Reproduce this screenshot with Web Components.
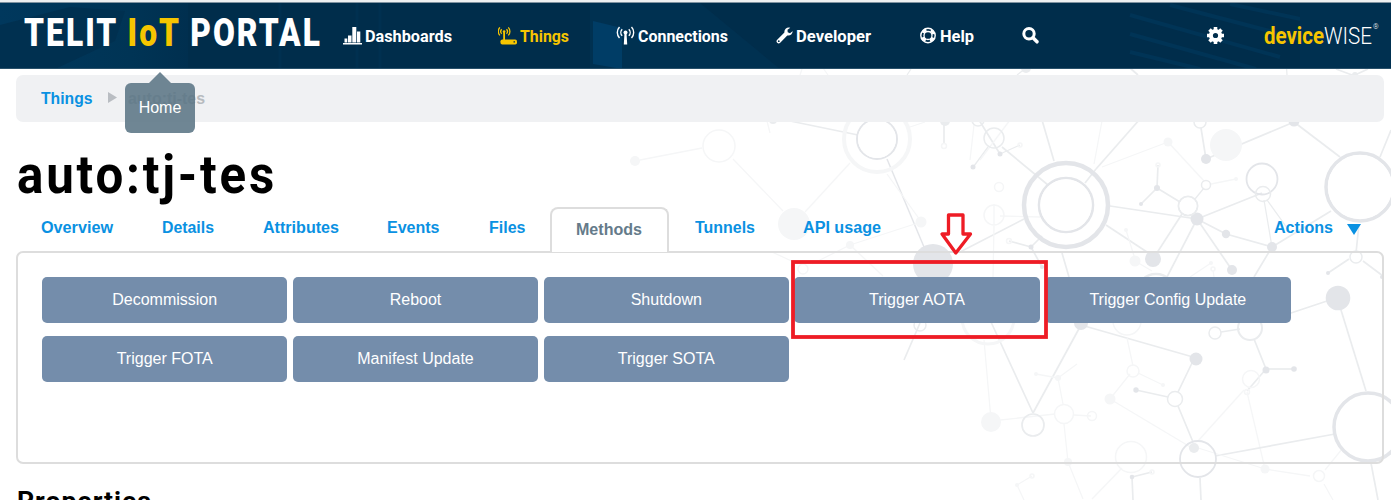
<!DOCTYPE html>
<html lang="en">
<head>
<meta charset="utf-8">
<title>auto:tj-tes</title>
<style>
html,body{margin:0;height:500px;overflow:hidden;background:#fff}
body{font:16px "Liberation Sans",Arial,sans-serif}
</style>
</head>
<body>
<portal-page></portal-page>
<script>
function define(name, html, after) {
  const t = document.createElement('template');
  t.innerHTML = html;
  customElements.define(name, class extends HTMLElement {
    connectedCallback() {
      if (this.shadowRoot) return;
      this.attachShadow({mode: 'open'}).appendChild(t.content.cloneNode(true));
      if (after) after.call(this, this.shadowRoot);
    }
  });
}

/* Text condensed or widened horizontally to a given width */
define('fit-text', `<style>:host{display:inline-block;white-space:nowrap}span{display:inline-block;transform-origin:0 50%}</style><span><slot></slot></span>`,
function (root) {
  const s = root.querySelector('span'), w = +this.getAttribute('w');
  this.style.width = w + 'px';
  const n = s.offsetWidth ? s.getBoundingClientRect().width : w;
  s.style.transform = 'scaleX(' + (w / n) + ')';
});

/* Decorative network of nodes and links */
define('network-backdrop', `<style>:host{display:block;position:absolute;inset:0;z-index:-1}svg{display:block}</style><svg width="1391" height="500" fill="none"></svg>`,
function (root) {
  const S = '#e3e5e9', M = '#eaecee', L = '#f5f6f7';
  const lines = [
    [L,1.5,640,160,702,148],[L,1.5,733,159,783,211],[L,1.5,805,212,850,163],[M,2,790,121,858,135],[S,1.7,887,159,924,247],[L,1.5,887,174,920,220],[L,1.5,772,252,798,264],[L,1.5,812,264,850,245],[L,1.5,850,245,921,222],[L,1.5,850,245,883,276],
    [M,2,944,124,944,144],[L,1.5,910,127,925,122],[L,1.5,974,125,970,160],[M,1.5,988,147,974,166],[M,2,979,120,1000,154],[M,1.5,1000,154,1020,145],[M,2,1002,147,1048,185],[L,1.5,980,160,1010,120],
    [M,2,960,252,1024,219],[M,2,1042,120,1054,161],[M,2,1096,169,1140,119],[M,2,1096,169,1085,183],[L,1.5,1102,167,1168,142],[L,1.5,1102,121,1094,164],[L,1.5,1168,142,1204,181],[L,1.5,1211,184,1236,179],
    [M,2,1158,165,1157,188],[M,2,1157,188,1141,204],[M,2,1157,188,1180,202],[M,1.5,1195,199,1204,188],[M,2,1110,206,1197,219],[M,2,1106,225,1153,256],[M,2,1182,214,1153,259],[M,2,1197,219,1262,193],[M,2,1197,219,1226,234],[M,2,1197,219,1167,277],[M,2,1197,219,1232,270],[M,2,1226,234,1272,247],[M,1.5,1264,200,1272,247],[M,1.5,1267,200,1290,232],[M,2,1272,247,1331,211],[M,2,1272,247,1254,277],
    [M,2,1201,128,1206,159],[M,2,1206,159,1294,122],[M,2,1294,122,1340,157],[M,2,1380,157,1391,130],[M,2,1359,224,1356,253],[M,2,1349,259,1328,273],[M,2,1363,261,1383,276],
    [L,1.5,994,225,994,204],[L,1.5,1000,216,1040,217],[L,1.5,994,226,993,279],[M,2,1009,241,1031,247],[M,2,1031,247,1042,236],[M,2,1031,247,1042,267],[M,2,1062,253,1069,277],[L,1.5,1126,230,1135,259],[L,1.5,1135,261,1152,271],[L,1.5,1190,277,1211,263],[L,1.5,1213,270,1214,277],
    [M,2,991,322,1033,413],[M,2,1033,413,1081,325],[M,2,1081,325,1193,357],[M,2,1193,361,1178,392],[M,2,1136,390,1168,397],[M,2,1178,406,1193,442],[L,1.5,1110,399,1130,374],[L,1.5,1127,338,1133,366],[L,1.5,1138,373,1163,385],[L,1.5,1110,399,1192,448],[M,2,1221,332,1240,329],[M,2,1254,339,1266,369],[M,2,1266,369,1293,369],[M,2,1266,369,1247,391],[L,1.5,1244,390,1198,441],[L,1.5,1247,392,1265,469],[M,2,1285,315,1330,300],[M,2,1341,310,1366,391],[M,2,1215,456,1335,434],
    [L,1.5,984,340,991,420],[L,1.5,991,421,1055,414],[L,1.5,1036,374,1058,378],[L,1.5,1058,378,1077,364],[L,1.5,1058,378,1063,404],[L,1.5,1074,415,1091,416],[L,1.5,1064,424,1068,462],[L,1.5,1068,462,1083,499],[L,1.5,1092,499,1122,468],[M,2,1132,477,1133,500],[M,2,1132,477,1152,472],[L,1.5,1017,485,1032,476],[L,1.5,1017,485,1024,500],[M,2,1200,478,1201,500],[L,1.5,1195,447,1265,469],[L,1.5,1265,469,1310,476],[L,1.5,1325,470,1342,449],[L,1.5,1324,484,1333,500],[M,2,1371,463,1378,500],[M,2,920,323,904,360],[M,1.5,1238,280,1240,277],[M,1.5,1017,75,1026,68],[M,1.5,911,69,907,75],[L,1.5,800,75,802,69],[L,1.5,828,75,823,68],[M,2,1130,68,1138,75],[M,2,1336,69,1352,75],[M,2,1368,69,1355,75],[M,1.5,1286,60,1287,75],[L,1.5,767,121,770,133]
  ];
  const rings = [
    [L,1.5,719,146,16],[L,4,877,139,33],[S,2,877,139,20],[M,1.5,994,138,10],[L,1.5,944,146,2.5],[M,1.5,978,120,6],[L,1.5,1020,145,2],
    [S,4.5,1066,205,42],[S,2.6,1066,205,27],[L,1.5,994,215,10],[L,1.5,999,187,4.5],[L,1.5,1009,241,2.5],[M,1.5,1200,122,6],[S,1.8,1262,179,15.5],[M,1.5,1263,194,7.5],[M,2,1188,206,9.5],[M,1.5,1206,185,4.5],[L,1.5,1158,165,2],[S,3.5,1360,187,34],[M,1.5,1356,257,6],[M,2.5,1156,293,19],[L,1.5,1213,269,2],
    [L,3,988,318,26],[L,1.5,1127,321,14],[L,1.5,1133,371,6],[M,1.7,1033,425,11],[L,1.5,1064,414,9.5],[L,1.5,1092,416,4.5],[M,1.5,1175,399,7.5],[M,1.5,1215,333,6],[M,2,1250,328,12],[L,1.5,1251,379,8.5],[L,1.5,1247,392,2.5],[L,1.5,1131,457,15.5],[S,1.8,1198,459,18],[S,3.5,1368,427,34],[L,1.5,1319,476,5.5],[L,1.5,1152,472,2],[L,1.5,1032,476,2],[L,1.5,803,269,5],[M,1.5,920,325,6]
  ];
  const dots = [
    [L,635,161,5],[L,794,224,16],[L,921,222,5.5],[L,850,245,4],[S,933,264,20],[M,773,120,4],[M,945,121,5],[S,973,167,2.5],[S,1000,154,2.5],[S,1031,247,2.5],[S,1042,267,2],[L,1168,142,4.5],[L,1226,145,16],[S,1206,159,5],[S,1294,121,5.5],[S,1157,188,3],[S,1141,204,2],[L,1236,179,2],[S,1197,219,6.5],[S,1226,234,4.2],[S,1272,247,5],[S,1153,259,8],[L,1135,261,5.5],[L,1126,230,2],[S,1232,270,5],[L,1211,263,2],[S,1328,273,2],[S,1382,277,2],
    [S,1338,298,12.3],[S,1081,323,7],[S,1196,359,6.5],[S,1136,390,2.7],[L,1110,399,5.5],[L,1163,385,2],[S,1266,370,3.5],[S,1294,369,2.8],[L,991,422,10],[L,1058,378,3],[L,1036,374,2],[L,1068,462,4],[M,1194,448,5],[L,1265,469,4.5],[S,1132,477,2.3],[L,1017,485,2],[M,1026,68,5],[M,1355,75,3]
  ];
  root.querySelector('svg').innerHTML =
    lines.map(([c,w,a,b,x,y]) => `<path stroke="${c}" stroke-width="${w * .85}" d="M${a} ${b}L${x} ${y}"/>`).join('') +
    dots.map(([c,x,y,r]) => `<circle fill="${c}" cx="${x}" cy="${y}" r="${r}"/>`).join('') +
    rings.map(([c,w,x,y,r]) => `<circle stroke="${c}" stroke-width="${w}" cx="${x}" cy="${y}" r="${r}"/>`).join('') +
    `<circle cx="1066" cy="205" r="25.7" fill="#fff"/><circle cx="877" cy="139" r="19" fill="#fff"/><circle cx="1360" cy="187" r="32" fill="#fff"/><circle cx="1188" cy="206" r="8.5" fill="#fff"/>`;
});

const icons = {
  chart: `<path d="M0 17h19v1.5H0zM1.5 12.500H4.300V16.500H1.500zM5 9.500h3.500v7H5zM9.300 1h4v15.500h-4zM14 5.500h3.300v11H14z"/>`,
  router: `<rect x="2.500" y="13.500" width="16.500" height="5" rx="1.800"/><path d="M5.200 6h1.800v8H5.200z"/><circle cx="6.100" cy="5.500" r="1.300"/><g fill="none" stroke="currentColor" stroke-width="1.300"><path d="M3.700 3.200a3.400 3.400 0 0 0 0 4.600M8.500 3.200a3.400 3.400 0 0 1 0 4.600M1.900 1.400a5.800 5.800 0 0 0 0 8M10.300 1.400a5.800 5.800 0 0 1 0 8"/></g><path fill="#002d4b" d="M15.500 15.300h1.500v1.300h-1.500z"/>`,
  signal: `<circle cx="9.500" cy="6.500" r="2"/><path d="M8.500 7h2l.7 11.500H7.800z"/><g fill="none" stroke="currentColor" stroke-width="1.400"><path d="M6.200 3.200a4.700 4.700 0 0 0 0 6.600M12.800 3.200a4.700 4.700 0 0 1 0 6.600M3.500 1a8 8 0 0 0 0 11M15.500 1a8 8 0 0 1 0 11"/></g>`,
  wrench: `<path fill-rule="evenodd" d="M16.700 5.500c-.3 2.700-2.800 4.500-5.400 3.900L4.200 16.700a2.100 2.100 0 0 1-3-3l7.200-7.100C8 3.700 10.300 1.400 13 1.500l1.300.3-2.800 2 .2 2.400 2.300 1 2.500-1.900zM2.800 14.300a.9.900 0 1 0 0 1.800.9.900 0 0 0 0-1.800z"/>`,
  help: `<g fill="none" stroke="currentColor"><circle cx="8" cy="9.500" r="7.200" stroke-width="1.400"/><circle cx="8" cy="9.500" r="4" stroke-width="1.300"/><circle cx="8" cy="9.500" r="5.700" stroke-width="3" stroke-dasharray="4.480 4.480" transform="rotate(22.500 8 9.500)"/></g>`,
  search: `<g fill="none" stroke="currentColor"><circle cx="7" cy="7.700" r="5.200" stroke-width="3"/><path d="M11 11.800l4 4" stroke-width="3.600" stroke-linecap="round"/></g>`,
  cog: `<circle cx="8.500" cy="9.500" r="4.600" fill="none" stroke="currentColor" stroke-width="4"/><g stroke="currentColor" stroke-width="3.600"><path d="M8.500 1v3M8.500 15v3M0 9.500h3M14 9.500h3M2.500 3.500l2 2M12.500 13.500l2 2M2.500 15.500l2-2M12.500 5.500l2-2"/></g>`
};

define('nav-item', `<style>
:host{display:flex;align-items:center;color:#fff;font:bold 17px/20px Roboto,sans-serif}
:host([active]){color:#f6c500}
.icon{flex:none;width:var(--icon,22px)}svg{display:block}
</style><div class="icon"><svg width="20" height="20" fill="currentColor"></svg></div><slot></slot>`,
function (root) { root.querySelector('svg').innerHTML = icons[this.getAttribute('icon')]; });

define('portal-header', `<style>
:host{display:grid;position:relative;box-sizing:border-box;height:69px;padding:3px 0 0 24px;
grid-template-columns:319px 155px 118px 160px 144px 102px 185px 57px 1fr;align-items:center;background:linear-gradient(#eef0f1 2px,#8093a1 2px 3px,#002d4b 3px);color:#fff;font-family:Roboto,sans-serif;z-index:0}
.art{position:absolute;left:0;top:3px;z-index:-1}
.logo{font-size:38.500px;line-height:44px;font-weight:900;letter-spacing:2.500px;margin-top:-6px}
.logo b,.dw b{color:#f6c500}.logo b{font-weight:900}
.dw{display:flex;font-size:23.500px;line-height:28px;font-weight:300}
.dw b{font-weight:700}
sup{font-size:7px;line-height:8px;margin-left:1px;margin-top:1px}
</style>
<svg class="art" width="1391" height="66"><defs><linearGradient id="a"><stop offset="0" stop-color="#00385d"/><stop offset=".7" stop-color="#003455"/><stop offset="1" stop-color="#002f4f"/></linearGradient></defs>
<rect width="1391" height="66" fill="#002d4b"/><path fill="url(#a)" d="M0 0h188v66H0z"/><path fill="#003050" d="M0 22l70-18 55 4-10 30-60 28H0z"/><path fill="#003151" d="M590 0h110l80 66H590z"/><path fill="#003d66" d="M593 18l29 7v41l-29-5z"/>
<g stroke="#00375b" stroke-width="4" opacity=".7"><path d="M1130 12l150 42M1130 31l126 35M1170 2l130 34M1230 1l75 16M1130 49l70 17"/></g><path stroke="#003050" stroke-width="3" d="M280 0v66M357 0v66M380 0v66"/><path fill="#003050" d="M1300 0h91v66h-91z"/><path fill="#29516b" d="M0 65h1391v1H0z"/></svg>
<fit-text class="logo" w="298">TELIT <b>IoT</b> PORTAL</fit-text>
<nav-item icon="chart"><fit-text w="87">Dashboards</fit-text></nav-item>
<nav-item icon="router" active><fit-text w="49">Things</fit-text></nav-item>
<nav-item icon="signal"><fit-text w="90">Connections</fit-text></nav-item>
<nav-item icon="wrench" style="--icon:20px"><fit-text w="75">Developer</fit-text></nav-item>
<nav-item icon="help" style="--icon:20px"><fit-text w="34">Help</fit-text></nav-item>
<nav-item icon="search"></nav-item>
<nav-item icon="cog"></nav-item>
<div class="dw"><fit-text w="60"><b>device</b></fit-text><fit-text w="48">WISE</fit-text><sup>®</sup></div>`);

define('bread-crumb', `<style>
:host{display:flex;align-items:center;height:46.500px;margin:6px 7px 0 16px;padding:1px 0 0 24.500px;box-sizing:border-box;border-radius:7px;background:#f0f1f3;font-weight:bold;line-height:20px;color:#b7bbbf}
a{color:#0a91e2}svg{margin:-2px 11px 0 16px}
</style><a><fit-text w="51.500">Things</fit-text></a><svg width="9" height="11"><path d="M0 0l9 5.500L0 11z" fill="#b9bdc2"/></svg><fit-text w="77">auto:tj-tes</fit-text>`);

define('tool-tip', `<style>
:host{position:absolute;left:125px;top:83px;width:70px;height:50px;border-radius:6px;background:rgba(91,117,133,.88);color:#fff;font-size:16px;line-height:49px;text-align:center;z-index:3}
:host::before{content:"";position:absolute;left:24px;top:-11px;border:solid transparent;border-width:0 11px 11px;border-bottom-color:rgba(91,117,133,.88)}
</style><slot></slot>`);

define('tab-item', `<style>
:host{display:block;box-sizing:border-box;height:45px;padding-top:11px;line-height:20px;font-weight:bold;color:#0a91e2}
:host([active]){padding:11px 0 0 24px;border:2px solid #ddd;border-bottom:0;border-radius:8px 8px 0 0;background:#fff;color:#657b8a}
</style><slot></slot>`);

define('tab-bar', `<style>
:host{display:grid;grid-template-columns:121px 101px 124.500px 102px 61px 144.500px 108px 471px 1fr;height:45px;margin-top:4px;padding-left:40.500px;position:relative;z-index:1}
tab-item[active]{width:119px}
.act{display:flex;gap:14px}svg{margin-top:5.500px}
</style>
<tab-item><fit-text w="72">Overview</fit-text></tab-item><tab-item><fit-text w="52">Details</fit-text></tab-item><tab-item><fit-text w="76">Attributes</fit-text></tab-item><tab-item><fit-text w="52.500">Events</fit-text></tab-item><tab-item><fit-text w="36.500">Files</fit-text></tab-item>
<tab-item active><fit-text w="66">Methods</fit-text></tab-item><tab-item><fit-text w="60">Tunnels</fit-text></tab-item><tab-item><fit-text w="78">API usage</fit-text></tab-item>
<tab-item><div class="act"><fit-text w="59">Actions</fit-text><svg width="14" height="11"><path d="M0 0h14L7 11z" fill="#0a91e2"/></svg></div></tab-item>`);

define('method-button', `<style>:host{display:block;height:46.500px;line-height:46px;border-radius:5px;background:#748dab;color:#fff;text-align:center}</style><slot></slot>`);

define('method-panel', `<style>
:host{display:grid;box-sizing:border-box;height:213px;margin:-1px 7px 0 16px;padding:23.500px 0 0 24px;border:2px solid #ddd;border-radius:7px;grid-template-columns:repeat(5,245.400px);grid-auto-rows:46.500px;gap:12.500px 5.400px}
</style><slot></slot>`);

/* Red frame and arrow over the highlighted method */
define('callout-mark', `<style>:host{position:absolute;left:791px;top:210px;z-index:4}svg{display:block}</style>
<svg width="258" height="130" fill="none" stroke="#ee1c25"><rect x="2" y="52" width="253" height="75" stroke-width="3.800"/><path d="M157.500 5h14.500v19h7.500L164.800 43 151 24h6.500z" stroke-width="3.300" stroke-linejoin="round"/></svg>`);

define('portal-page', `<style>
:host{display:block;position:relative;width:1391px;height:500px;overflow:hidden;isolation:isolate}
h1,h2{margin:0;font-family:Roboto,sans-serif;color:#000;font-weight:bold;white-space:nowrap}
h1{font-size:53px;line-height:64px;padding-top:21.500px;margin-left:17px;height:60px;letter-spacing:3px}
h2{font-size:26px;line-height:32px;margin:21px 0 0 17px;letter-spacing:1px}
</style>
<network-backdrop></network-backdrop>
<portal-header></portal-header>
<bread-crumb></bread-crumb>
<h1><fit-text w="260">auto:tj-tes</fit-text></h1>
<tab-bar></tab-bar>
<method-panel>
<method-button>Decommission</method-button><method-button>Reboot</method-button><method-button>Shutdown</method-button><method-button>Trigger AOTA</method-button><method-button>Trigger Config Update</method-button>
<method-button>Trigger FOTA</method-button><method-button>Manifest Update</method-button><method-button>Trigger SOTA</method-button>
</method-panel>
<h2><fit-text w="135">Properties</fit-text></h2>
<tool-tip>Home</tool-tip>
<callout-mark></callout-mark>`);
</script>
</body>
</html>
